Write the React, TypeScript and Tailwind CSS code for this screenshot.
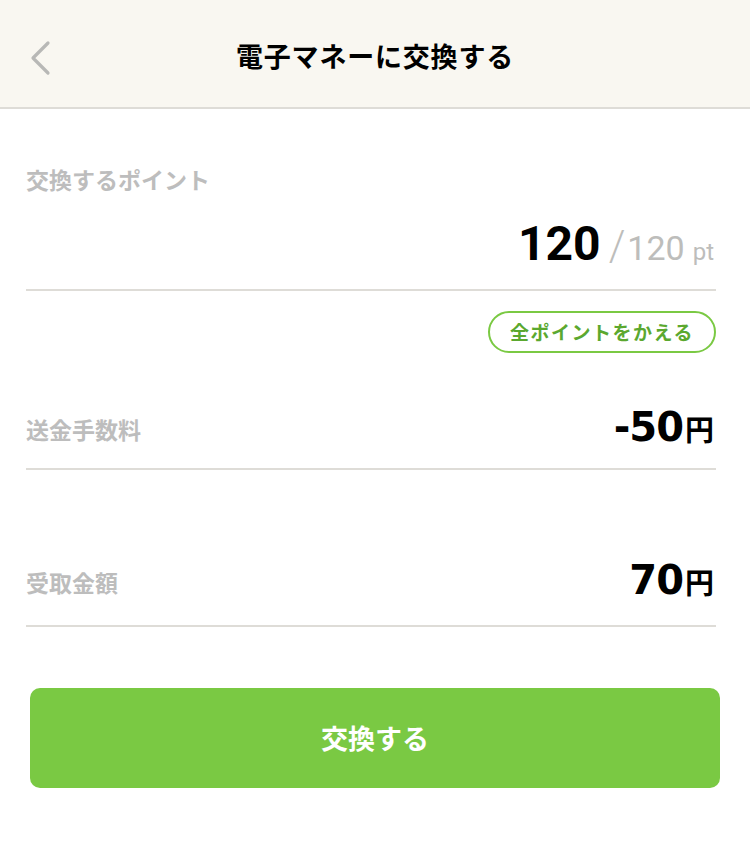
import React from "react";

const jp = { fontFamily: '"Noto Sans CJK JP", "Noto Sans", sans-serif' };
const num = { fontFamily: 'Roboto, "Noto Sans CJK JP", sans-serif' };
const wide = { fontFamily: '"DejaVu Sans", Roboto, sans-serif' };

function Row({ label, value, pb, mt }: { label: string; value: string; pb: string; mt: string }) {
  return (
    <div className={`flex items-baseline justify-between ${mt} ${pb} border-b-2 border-[#dedcd7]`}>
      <span className="self-center mt-[4px] text-[23px] leading-[32px] font-bold text-[#bdbdbd]" style={jp}>
        {label}
      </span>
      <span className="flex items-baseline pr-[2px]">
        <span className="text-[40px] leading-none font-bold text-black tracking-[-1px]" style={wide}>
          {value}
        </span>
        <span className="text-[29px] leading-none font-bold text-black ml-[2px]" style={jp}>
          円
        </span>
      </span>
    </div>
  );
}

export default function App() {
  return (
    <div className="w-[750px] min-h-[844px] bg-white" style={jp}>
      <header className="relative h-[109px] bg-[#f9f7f1] border-b-2 border-[#dedcd7] flex items-center justify-center">
        <svg
          className="absolute left-[28px] top-[40px]"
          width="26"
          height="36"
          viewBox="0 0 26 36"
          fill="none"
        >
          <polyline
            points="20,3 5,18 20,33"
            stroke="#b8b8b6"
            strokeWidth="3.2"
            strokeLinecap="round"
            strokeLinejoin="round"
          />
        </svg>
        <h1 className="mt-[5px] text-[27px] font-bold text-black tracking-[0.8px]" style={jp}>
          電子マネーに交換する
        </h1>
      </header>

      <main className="pl-[26px] pr-[34px]">
        <div className="mt-[54px] text-[23px] leading-[32px] font-bold text-[#bdbdbd]" style={jp}>
          交換するポイント
        </div>
        <div className="mt-[25px] pb-[21px] border-b-2 border-[#dedcd7] flex items-baseline justify-end pr-[2px]" style={num}>
          <span className="text-[48px] leading-none font-bold text-black">120</span>
          <span className="text-[42px] leading-none text-[#bdbdbb] ml-[8px] mr-[2px] font-light">/</span>
          <span className="text-[34px] leading-none text-[#bdbdbb]">120</span>
          <span className="text-[24px] leading-none text-[#bdbdbb] ml-[8px]">pt</span>
        </div>

        <div className="flex justify-end mt-[20px]">
          <button
            className="h-[42px] w-[228px] rounded-full border-2 border-[#7ac943] text-[#5ba82f] text-[19px] font-bold tracking-[1.5px] flex items-center justify-center"
            style={jp}
          >
            全ポイントをかえる
          </button>
        </div>

        <Row label="送金手数料" value="-50" mt="mt-[54px]" pb="pb-[21px]" />
        <Row label="受取金額" value="70" mt="mt-[90px]" pb="pb-[25px]" />
      </main>

      <div className="px-[30px] mt-[61px]">
        <button
          className="w-full h-[100px] rounded-[10px] bg-[#7ac943] text-white text-[27px] font-bold flex items-center justify-center"
          style={jp}
        >
          交換する
        </button>
      </div>
    </div>
  );
}
